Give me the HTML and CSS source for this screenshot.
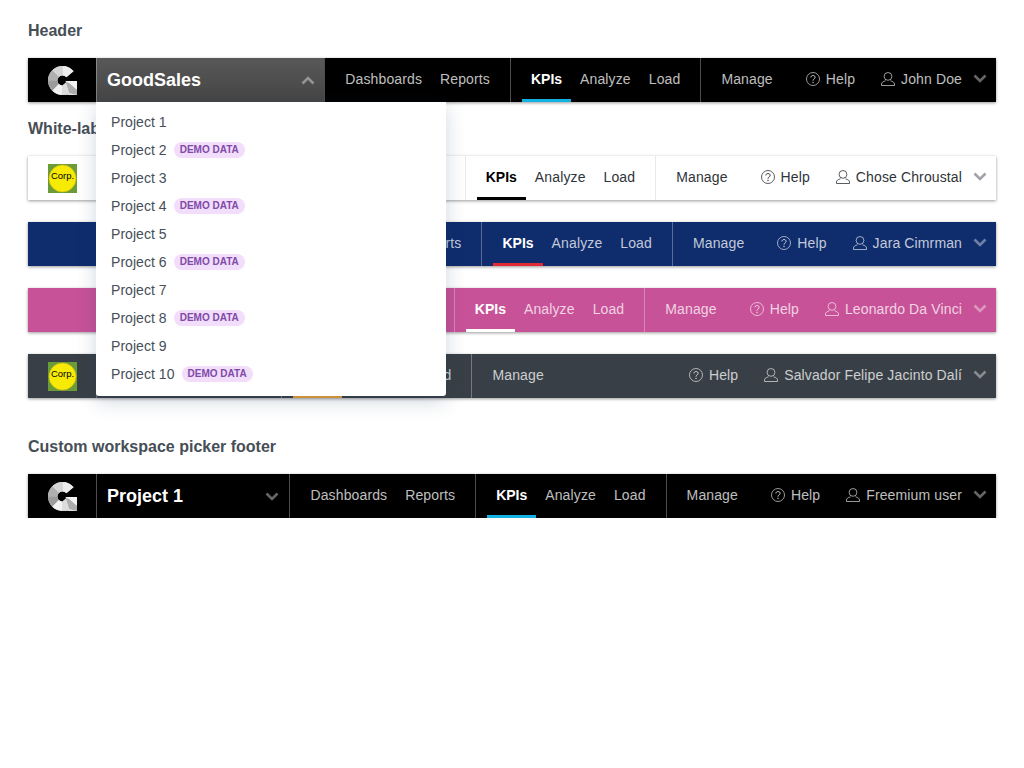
FILE: index.html
```html
<!DOCTYPE html>
<html lang="en">
<head>
  <meta charset="UTF-8" />
  <title>Header</title>
  <link rel="stylesheet" href="styles.css">
</head>
<body>

  <svg class="defs" width="0" height="0">
    <symbol id="logo-g" viewBox="0 0 29 29">
      <path fill="#c8c8c8" d="M25.600 5.200 A14.500 14.500 0 1 0 14.500 29 H29 V15 H17.500 L18 16.500 L14.500 19.500 A5 5 0 1 1 18.300 11.300z"/>
      <path fill="#ececec" d="M14.500 0 A14.500 14.500 0 0 1 25.600 5.200 L18.300 11.300 A5 5 0 0 0 14.500 9.500z"/>
      <path fill="#d4d4d4" d="M4.250 4.250 A14.500 14.500 0 0 1 14.500 0 V9.500 A5 5 0 0 0 10.960 10.960z"/>
      <path fill="#b0b0b0" d="M0 14.500 A14.500 14.500 0 0 1 4.250 4.250 L10.960 10.960 A5 5 0 0 0 9.500 14.500z"/>
      <path fill="#9c9c9c" d="M4.250 24.750 A14.500 14.500 0 0 1 0 14.500 H9.500 A5 5 0 0 0 10.960 18.040z"/>
      <path fill="#f1f1f1" d="M14.500 29 A14.500 14.500 0 0 1 4.250 24.750 L10.960 18.040 A5 5 0 0 0 14.500 19.500z"/>
      <path fill="#dcdcdc" d="M14.500 19.500 V29 A14.500 14.500 0 0 0 21.500 27.200 L18 16.500z"/>
      <path fill="#f4f4f4" d="M17.500 15 H29 V24 L21 17z"/>
      <path fill="#adadad" d="M18 16.500 L21 17 L29 24 V29 L21.500 27.200z"/>
      <path fill="#e4e4e4" d="M21.500 27.200 L29 29 H20z"/>
    </symbol>
    <symbol id="logo-corp" viewBox="0 0 29 29">
      <rect width="29" height="29" fill="#6a9c37"/>
      <circle cx="14.500" cy="14.500" r="13.500" fill="#f7ea05" stroke="#d9b81a" stroke-width=".6"/>
    </symbol>
    <symbol id="icon-help" viewBox="0 0 14 14">
      <circle cx="7" cy="7" r="6.500" fill="none" stroke="currentColor" stroke-width=".8"/>
      <path fill="none" stroke="currentColor" d="M4.900 5.400 C4.900 2.900 9.100 2.900 9.100 5.300 C9.100 6.900 7 6.900 7 8.700"/>
      <rect x="6.400" y="9.800" width="1.200" height="1.300" fill="currentColor"/>
    </symbol>
    <symbol id="icon-user" viewBox="0 0 14 14">
      <circle cx="7" cy="4.400" r="3.900" fill="none" stroke="currentColor" stroke-width=".8"/>
      <path fill="none" stroke="currentColor" stroke-width=".8" d="M4.500 8.800 C2 9.500 .5 10.500 .5 12 V13.500 H13.500 V12 C13.500 10.500 12 9.500 9.500 8.800"/>
    </symbol>
    <symbol id="icon-down" viewBox="0 0 14 9">
      <path fill="none" stroke="currentColor" stroke-width="2.600" d="M1.500 1.500 L7 7 L12.500 1.500"/>
    </symbol>
    <symbol id="icon-up" viewBox="0 0 14 9">
      <path fill="none" stroke="currentColor" stroke-width="2.600" d="M1.500 7.500 L7 2 L12.500 7.500"/>
    </symbol>
  </svg>

  <section>
    <h2 class="title">Header</h2>
    <div class="bars">
      <header class="bar bar-black">
        <div class="logo"><svg width="29" height="29"><use href="#logo-g"/></svg></div>
        <div class="picker picker-open">
          <span class="picker-name">GoodSales</span>
          <svg class="chevron" width="14" height="9"><use href="#icon-up"/></svg>
        </div>
        <nav class="menu">
          <a>Dashboards</a>
          <a>Reports</a>
        </nav>
        <nav class="menu">
          <a class="active">KPIs</a>
          <a>Analyze</a>
          <a>Load</a>
        </nav>
        <nav class="menu">
          <a>Manage</a>
        </nav>
        <div class="right">
          <a class="help"><svg width="14" height="14"><use href="#icon-help"/></svg>Help</a>
          <a class="user"><svg width="14" height="14"><use href="#icon-user"/></svg>John Doe<svg class="chevron" width="14" height="9"><use href="#icon-down"/></svg></a>
        </div>
      </header>
    </div>
  </section>

  <section>
    <h2 class="title title-near">White-labeled</h2>
    <div class="bars">
      <header class="bar bar-white">
        <div class="logo"><svg width="29" height="29"><use href="#logo-corp"/></svg><span class="corp">Corp.</span></div>
        <div class="picker"></div>
        <nav class="menu">
          <a class="active">KPIs</a>
          <a>Analyze</a>
          <a>Load</a>
        </nav>
        <nav class="menu">
          <a>Manage</a>
        </nav>
        <div class="right">
          <a class="help"><svg width="14" height="14"><use href="#icon-help"/></svg>Help</a>
          <a class="user"><svg width="14" height="14"><use href="#icon-user"/></svg>Chose Chroustal<svg class="chevron" width="14" height="9"><use href="#icon-down"/></svg></a>
        </div>
      </header>

      <header class="bar bar-blue">
        <div class="logo"></div>
        <div class="picker"></div>
        <nav class="menu">
          <a>Reports</a>
        </nav>
        <nav class="menu">
          <a class="active">KPIs</a>
          <a>Analyze</a>
          <a>Load</a>
        </nav>
        <nav class="menu">
          <a>Manage</a>
        </nav>
        <div class="right">
          <a class="help"><svg width="14" height="14"><use href="#icon-help"/></svg>Help</a>
          <a class="user"><svg width="14" height="14"><use href="#icon-user"/></svg>Jara Cimrman<svg class="chevron" width="14" height="9"><use href="#icon-down"/></svg></a>
        </div>
      </header>

      <header class="bar bar-pink">
        <div class="logo"></div>
        <div class="picker"></div>
        <nav class="menu">
          <a class="active">KPIs</a>
          <a>Analyze</a>
          <a>Load</a>
        </nav>
        <nav class="menu">
          <a>Manage</a>
        </nav>
        <div class="right">
          <a class="help"><svg width="14" height="14"><use href="#icon-help"/></svg>Help</a>
          <a class="user"><svg width="14" height="14"><use href="#icon-user"/></svg>Leonardo Da Vinci<svg class="chevron" width="14" height="9"><use href="#icon-down"/></svg></a>
        </div>
      </header>

      <header class="bar bar-dark">
        <div class="logo"><svg width="29" height="29"><use href="#logo-corp"/></svg><span class="corp">Corp.</span></div>
        <div class="picker picker-narrow"></div>
        <nav class="menu">
          <a class="active">KPIs</a>
          <a>Analyze</a>
          <a>Load</a>
        </nav>
        <nav class="menu">
          <a>Manage</a>
        </nav>
        <div class="right right-push">
          <a class="help"><svg width="14" height="14"><use href="#icon-help"/></svg>Help</a>
          <a class="user"><svg width="14" height="14"><use href="#icon-user"/></svg>Salvador Felipe Jacinto Dalí<svg class="chevron" width="14" height="9"><use href="#icon-down"/></svg></a>
        </div>
      </header>
    </div>
  </section>

  <section>
    <h2 class="title title-far">Custom workspace picker footer</h2>
    <div class="bars">
      <header class="bar bar-black">
        <div class="logo"><svg width="29" height="29"><use href="#logo-g"/></svg></div>
        <div class="picker">
          <span class="picker-name">Project 1</span>
          <svg class="chevron" width="14" height="9"><use href="#icon-down"/></svg>
        </div>
        <nav class="menu">
          <a>Dashboards</a>
          <a>Reports</a>
        </nav>
        <nav class="menu">
          <a class="active">KPIs</a>
          <a>Analyze</a>
          <a>Load</a>
        </nav>
        <nav class="menu">
          <a>Manage</a>
        </nav>
        <div class="right">
          <a class="help"><svg width="14" height="14"><use href="#icon-help"/></svg>Help</a>
          <a class="user"><svg width="14" height="14"><use href="#icon-user"/></svg>Freemium user<svg class="chevron" width="14" height="9"><use href="#icon-down"/></svg></a>
        </div>
      </header>
    </div>
  </section>

  <ul class="dropdown">
    <li>Project 1</li>
    <li>Project 2 <span class="badge">Demo data</span></li>
    <li>Project 3</li>
    <li>Project 4 <span class="badge">Demo data</span></li>
    <li>Project 5</li>
    <li>Project 6 <span class="badge">Demo data</span></li>
    <li>Project 7</li>
    <li>Project 8 <span class="badge">Demo data</span></li>
    <li>Project 9</li>
    <li>Project 10 <span class="badge">Demo data</span></li>
  </ul>

</body>
</html>
```

FILE: styles.css
```css
body {
  font-family: "Liberation Sans", Arial, sans-serif;
  margin: 0;
  padding: 0 28px;
  background-color: #fff;
  position: relative;
}

.defs {
  position: absolute;
}

.title {
  font-size: 16px;
  line-height: 20px;
  font-weight: bold;
  color: #464e56;
  margin: 0;
  padding: 21px 0 17px;
}

.title-near {
  padding-top: 17px;
}

.title-far {
  padding-top: 39px;
}

.bars {
  display: flex;
  flex-direction: column;
  gap: 22px;
}

/* bar */
.bar {
  display: flex;
  align-items: stretch;
  height: 44px;
  font-size: 14px;
  letter-spacing: .125px;
  box-shadow: 0 1px 3px rgba(0, 0, 0, .4);
  --line: rgba(255, 255, 255, .3);
  --text: rgba(255, 255, 255, .75);
  --accent: #14b2e2;
  --strong: #fff;
}

.bar-black {
  background: #000;
}

.bar-white {
  background: #fff;
  --line: #e8e9ea;
  --text: #2f3439;
  --accent: #000;
  --strong: #000;
}

.bar-blue {
  background: #0f2c6c;
  --accent: #e02b35;
}

.bar-pink {
  background: #c85298;
  --accent: #fff;
}

.bar-dark {
  background: #393f46;
  --accent: #e99e37;
}

.logo {
  position: relative;
  flex: 0 0 68px;
  display: flex;
  align-items: center;
  padding-left: 20px;
  box-sizing: border-box;
}

.corp {
  position: absolute;
  left: 20px;
  top: 14px;
  width: 29px;
  text-align: center;
  font-size: 9.500px;
  line-height: 12px;
  letter-spacing: 0;
  color: #000;
}

.picker {
  flex: 1 1 auto;
  display: flex;
  align-items: center;
  justify-content: space-between;
  padding: 0 10px;
  border-left: 1px solid var(--line);
  color: #fff;
  letter-spacing: 0;
}

.picker-open {
  background: linear-gradient(#585858, #454545);
  padding-right: 9px;
}

.picker-narrow {
  flex: 0 0 185px;
  box-sizing: border-box;
}

.picker-name {
  font-size: 18px;
  font-weight: bold;
}

.chevron {
  color: rgba(255, 255, 255, .4);
  flex: none;
}

.menu {
  display: flex;
  padding: 0 11px;
  border-left: 1px solid var(--line);
}

.menu a {
  display: flex;
  align-items: center;
  padding: 0 9px 2px;
  color: var(--text);
  position: relative;
}

.menu a.active {
  color: var(--strong);
  font-weight: bold;
  letter-spacing: 0;
}

.menu a.active::after {
  content: "";
  position: absolute;
  left: 0;
  right: 0;
  bottom: 0;
  height: 3px;
  background: var(--accent);
}

.right {
  display: flex;
  align-items: center;
  padding: 0 0 2px 13px;
  color: var(--text);
}

.right-push {
  margin-left: auto;
}

.help,
.user {
  display: flex;
  align-items: center;
}

.help svg,
.user svg {
  margin-right: 6px;
}

.user {
  margin-left: 26px;
}

.user .chevron {
  margin: 0 9px 2px 11px;
}

.bar-white .chevron {
  color: #a0a3a7;
}

/* dropdown */
.dropdown {
  position: absolute;
  left: 96px;
  top: 102px;
  width: 350px;
  box-sizing: border-box;
  margin: 0;
  padding: 6px 0 8px;
  list-style: none;
  background: #fff;
  border-radius: 0 0 3px 3px;
  box-shadow: 0 5px 20px rgba(20, 56, 93, .2);
}

.dropdown li {
  display: flex;
  align-items: center;
  gap: 7px;
  height: 28px;
  padding: 0 15px;
  font-size: 14px;
  letter-spacing: .05px;
  color: #464e56;
}

.badge {
  display: inline-block;
  height: 16px;
  line-height: 16px;
  padding: 0 6px;
  border-radius: 8px;
  background: #f2ddfb;
  color: #7f4aa8;
  font-size: 10px;
  font-weight: bold;
  letter-spacing: 0;
  text-transform: uppercase;
}
```
